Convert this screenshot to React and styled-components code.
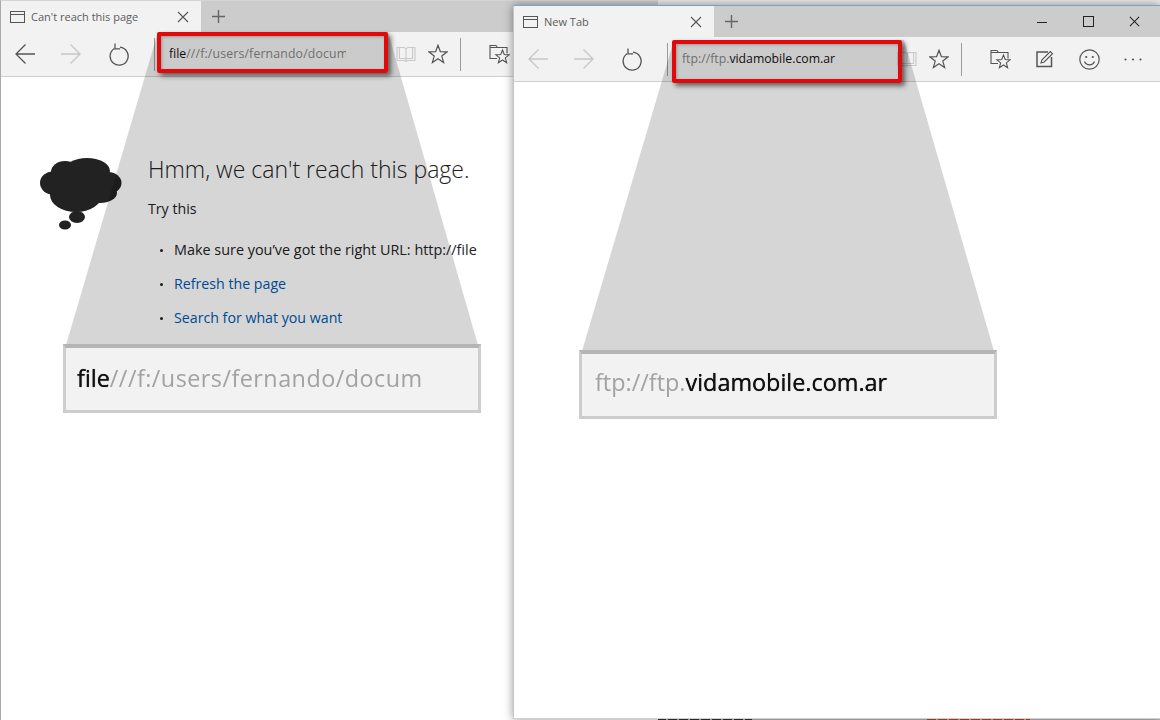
import React from "react";
import styled, { createGlobalStyle } from "styled-components";

const Global = createGlobalStyle`
  html, body { margin: 0; padding: 0; background: #fff; }
  body { font-family: "Open Sans", "Noto Sans", sans-serif; }
`;

const Canvas = styled.div`
  position: relative;
  width: 1160px;
  height: 720px;
  overflow: hidden;
  background: #e9e9e9;
`;

const Window = styled.section`
  position: absolute;
  left: ${(p) => p.$x}px;
  top: ${(p) => p.$y}px;
  width: ${(p) => p.$w}px;
  height: ${(p) => p.$h}px;
  display: flex;
  flex-direction: column;
  box-sizing: border-box;
  background: #fff;
  border-left: 1px solid ${(p) => (p.$front ? "#c4c4c4" : "#a9a9a9")};
  border-top: 1px solid ${(p) => (p.$front ? "#7f9fc6" : "#d4d4d4")};
  border-bottom: ${(p) => (p.$front ? "1px solid #d0d0d0" : "0")};
  box-shadow: ${(p) => (p.$front ? "0 0 9px rgba(0,0,0,.42)" : "none")};
`;

const TabStrip = styled.div`
  display: flex;
  align-items: stretch;
  height: 31px;
  background: #cccccc;
  flex: none;
`;

const Tab = styled.div`
  width: 200px;
  display: flex;
  align-items: center;
  box-sizing: border-box;
  padding-left: 9px;
  background: #f2f2f2;
  color: #5c5c5c;
  font-size: 11px;
`;

const TabTitle = styled.span`
  margin-left: 6px;
  flex: 1;
  white-space: nowrap;
`;

const StripSlot = styled.div`
  width: ${(p) => p.$w || 36}px;
  display: flex;
  align-items: center;
  justify-content: center;
  flex: none;
`;

const Captions = styled.div`
  margin-left: auto;
  margin-right: 3px;
  display: flex;
`;

const Toolbar = styled.div`
  display: flex;
  align-items: center;
  height: 44px;
  flex: none;
  background: #f2f2f2;
  border-bottom: 1px solid #cfcfcf;
  box-sizing: content-box;
`;

const NavSlot = styled.div`
  width: ${(p) => p.$w || 46}px;
  margin-left: ${(p) => p.$ml || 0}px;
  height: 100%;
  display: flex;
  align-items: center;
  justify-content: center;
  flex: none;
`;

const Divider = styled.div`
  width: 1px;
  height: 33px;
  margin-left: ${(p) => p.$ml || 0}px;
  background: #9b9b9b;
  flex: none;
`;

const Address = styled.div`
  width: ${(p) => p.$w}px;
  flex: none;
  box-sizing: border-box;
  padding-left: 14px;
  font-size: 12.25px;
  line-height: 16px;
  color: #858585;
  display: flex;
`;

const UrlClip = styled.div`
  width: 177px;
  overflow: hidden;
  white-space: nowrap;
`;

const Strong = styled.span`
  color: #111;
`;

const TrackedPath = styled.span`
  letter-spacing: ${(p) => p.$track}px;
`;

const Page = styled.main`
  flex: 1;
  min-height: 0;
  display: flex;
  align-items: flex-start;
  gap: 26px;
  padding: 79px 0 0 39px;
  background: #fff;
  color: #222;
`;

const Copy = styled.div`
  display: flex;
  flex-direction: column;
  white-space: nowrap;
`;

const CloudWrap = styled.div`
  margin-top: 2px;
  flex: none;
  display: flex;
`;

const Heading = styled.h1`
  margin: 0;
  font-size: 23px;
  line-height: 26px;
  font-weight: 300;
  color: #222;
`;

const Lead = styled.p`
  margin: 17px 0 0;
  font-size: 14.2px;
  line-height: 20px;
`;

const Hints = styled.ul`
  margin: 21px 0 0;
  padding: 0;
  list-style: none;
  display: flex;
  flex-direction: column;
  gap: 14px;
`;

const Hint = styled.li`
  display: flex;
  align-items: center;
  font-size: ${(p) => (p.$link ? 14.2 : 14.4)}px;
  line-height: 20px;
  color: ${(p) => (p.$link ? "#0058b0" : "#222")};
  padding-left: 12px;
  &::before {
    content: "";
    width: 3px;
    height: 3px;
    border-radius: 50%;
    background: #222;
    margin-right: 11px;
  }
`;

const Beam = styled.div`
  position: absolute;
  left: ${(p) => p.$x}px;
  top: ${(p) => p.$y}px;
  width: 412px;
  height: ${(p) => p.$h}px;
  background: rgba(0, 0, 0, 0.16);
  clip-path: polygon(92px 0, 322px 0, 100% 100%, 0 100%);
  pointer-events: none;
`;

const RedBox = styled.div`
  position: absolute;
  left: ${(p) => p.$x}px;
  top: ${(p) => p.$y}px;
  width: ${(p) => p.$w}px;
  height: ${(p) => p.$h}px;
  box-sizing: border-box;
  border: 4px solid #e10a0a;
  border-radius: 2px;
  box-shadow: 3px 3px 5px rgba(0, 0, 0, 0.55), inset 1px 1px 3px rgba(0, 0, 0, 0.25);
`;

const Magnifier = styled.div`
  position: absolute;
  left: ${(p) => p.$x}px;
  top: ${(p) => p.$y}px;
  width: 418px;
  height: 69px;
  box-sizing: border-box;
  display: flex;
  align-items: center;
  padding: 0 0 ${(p) => p.$lift}px ${(p) => p.$indent}px;
  background: #f2f2f2;
  border: 3px solid #cdcdcd;
  border-top: 4px solid #b5b5b5;
  font-size: 23.4px;
  color: #a2a2a2;
`;

const MagText = styled.div`
  width: 346px;
  overflow: hidden;
  white-space: nowrap;
  filter: blur(0.45px);
`;

const MagStrong = styled.span`
  color: #111;
  text-shadow: 0 0 0.7px #000;
`;

const Peek = styled.div`
  position: absolute;
  left: 514px;
  right: 0;
  top: 718px;
  height: 2px;
  display: flex;
  align-items: flex-end;
  background: #bdbdbd;
`;

const PeekText = styled.span`
  height: 1px;
  width: ${(p) => p.$w}px;
  margin-left: ${(p) => p.$ml}px;
  background: repeating-linear-gradient(90deg, ${(p) => p.$c} 0 9px, transparent 9px 11px);
`;

const Line = ({ d, c = "#555", w = 1.3 }) => (
  <path d={d} fill="none" stroke={c} strokeWidth={w} />
);

const TabIcon = () => (
  <svg width="15" height="12" viewBox="0 0 15 12">
    <rect x="0.5" y="0.5" width="14" height="11" fill="none" stroke="#555" />
    <path d="M1 3.5h13" stroke="#555" />
  </svg>
);

const CloseIcon = ({ s = 12, c = "#555" }) => (
  <svg width={s} height={s} viewBox="0 0 12 12">
    <Line d="M1 1l10 10M11 1L1 11" c={c} w={1.1} />
  </svg>
);

const PlusIcon = () => (
  <svg width="13" height="13" viewBox="0 0 13 13">
    <path d="M6.5 0v13M0 6.5h13" stroke="#666" strokeWidth="1.4" />
  </svg>
);

const Arrow = ({ back, c }) => (
  <svg width="22" height="22" viewBox="0 0 22 22" style={back ? undefined : { transform: "scaleX(-1)" }}>
    <Line d="M21 11H2M11.5 1.5L2 11l9.5 9.5" c={c} w={1.3} />
  </svg>
);

const RefreshIcon = () => (
  <svg width="22" height="23" viewBox="0 0 22 23">
    <Line d="M12 4.2a9 9 0 1 1-5.6 1.3" c="#555" w={1.3} />
    <Line d="M7 0.5v5.4h5.2" c="#555" w={1.3} />
  </svg>
);

const BookIcon = () => (
  <svg width="20" height="18" viewBox="0 0 20 18">
    <Line d="M1 2.5h7l2 1.2 2-1.2h7v13h-7l-2 1-2-1H1zM10 3.7v12.6M3.4 2.5v11h6.6M16.6 2.5v11H10" c="#c9c9c9" w={1.1} />
  </svg>
);

const starPoints = (cx, cy, R, r) =>
  Array.from({ length: 10 }, (_, i) => {
    const a = (-90 + i * 36) * (Math.PI / 180);
    const q = i % 2 ? r : R;
    return `${(cx + q * Math.cos(a)).toFixed(2)},${(cy + q * Math.sin(a)).toFixed(2)}`;
  }).join(" ");

const StarIcon = () => (
  <svg width="20" height="20" viewBox="0 0 20 20">
    <polygon points={starPoints(10, 10.8, 9.6, 4)} fill="none" stroke="#555" strokeWidth="1.2" />
  </svg>
);

const HubIcon = () => (
  <svg width="21" height="21" viewBox="0 0 21 21">
    <Line d="M8 14.5H1V1.5h6l1.5 2H18v6M1 3.5h7.5" c="#555" w={1.1} />
    <polygon points={starPoints(13.5, 13, 7, 3)} fill="#f2f2f2" stroke="#555" strokeWidth="1.1" />
  </svg>
);

const NoteIcon = () => (
  <svg width="18" height="18" viewBox="0 0 18 18">
    <Line d="M12 2H1v14.5h14.5V7" c="#555" w={1.5} />
    <Line d="M5 13l1-3.2L14.3 1.5l2.2 2.2L8.2 12z" c="#555" w={1.1} />
  </svg>
);

const SmileIcon = () => (
  <svg width="21" height="21" viewBox="0 0 21 21">
    <circle cx="10.5" cy="10.5" r="9.7" fill="none" stroke="#555" strokeWidth="1.2" />
    <circle cx="7.2" cy="8" r="1.1" fill="#555" />
    <circle cx="13.8" cy="8" r="1.1" fill="#555" />
    <Line d="M5.5 12.5c1 2.4 3 3.4 5 3.4s4-1 5-3.4" c="#555" w={1.2} />
  </svg>
);

const DotsIcon = () => (
  <svg width="18" height="3" viewBox="0 0 18 3">
    <circle cx="1.5" cy="1.5" r="1.1" fill="#555" />
    <circle cx="9" cy="1.5" r="1.1" fill="#555" />
    <circle cx="16.5" cy="1.5" r="1.1" fill="#555" />
  </svg>
);

const Cloud = () => (
  <svg width="82" height="72" viewBox="40 158 82 72">
    <g fill="#222">
      <ellipse cx="53" cy="183" rx="13" ry="11.5" />
      <ellipse cx="65" cy="172" rx="14" ry="11" />
      <ellipse cx="87" cy="171" rx="23" ry="13" />
      <ellipse cx="108" cy="183" rx="13.5" ry="11" />
      <ellipse cx="100" cy="193" rx="17" ry="10" />
      <ellipse cx="76" cy="195" rx="26" ry="17" />
      <ellipse cx="85" cy="185" rx="25" ry="17" />
      <ellipse cx="77" cy="217" rx="8" ry="6" />
      <ellipse cx="65" cy="225" rx="6" ry="4.5" />
    </g>
  </svg>
);

const Chrome = ({ tab, addressWidth, backColor, children, captions }) => (
  <>
    <TabStrip>
      <Tab>
        <TabIcon />
        <TabTitle>{tab}</TabTitle>
        <StripSlot $w={36}>
          <CloseIcon />
        </StripSlot>
      </Tab>
      <StripSlot $w={35}>
        <PlusIcon />
      </StripSlot>
      {captions}
    </TabStrip>
    <Toolbar>
      <NavSlot $ml={1}><Arrow back c={backColor} /></NavSlot>
      <NavSlot><Arrow c="#c6c6c6" /></NavSlot>
      <NavSlot $ml={2}><RefreshIcon /></NavSlot>
      <Divider $ml={12} />
      <Address $w={addressWidth}>{children}</Address>
      <NavSlot $w={32}><BookIcon /></NavSlot>
      <NavSlot $w={32}><StarIcon /></NavSlot>
      <Divider $ml={6} />
      <NavSlot $w={44} $ml={16}><HubIcon /></NavSlot>
      <NavSlot $w={44} $ml={1}><NoteIcon /></NavSlot>
      <NavSlot $w={44}><SmileIcon /></NavSlot>
      <NavSlot $w={44}><DotsIcon /></NavSlot>
    </Toolbar>
  </>
);

export default function App() {
  return (
    <Canvas>
      <Global />
      <Peek>
        <PeekText $w={95} $ml={143} $c="#333" />
        <PeekText $w={103} $ml={175} $c="#c8401c" />
      </Peek>

      <Window $x={0} $y={0} $w={658} $h={720}>
        <Chrome tab="Can't reach this page" addressWidth={235} backColor="#555">
          <UrlClip>
            <Strong>file</Strong>
            <TrackedPath $track={0.17}>///f:/users/fernando/documents</TrackedPath>
          </UrlClip>
        </Chrome>
        <Page>
          <CloudWrap>
            <Cloud />
          </CloudWrap>
          <Copy>
            <Heading>Hmm, we can't reach this page.</Heading>
            <Lead>Try this</Lead>
            <Hints>
              <Hint>Make sure you’ve got the right URL: http://file</Hint>
              <Hint $link>Refresh the page</Hint>
              <Hint $link>Search for what you want</Hint>
            </Hints>
          </Copy>
        </Page>
      </Window>

      <Beam $x={66} $y={32} $h={313} />
      <RedBox $x={157} $y={32} $w={231} $h={41} />
      <Magnifier $x={63} $y={344} $indent={11} $lift={2}>
        <MagText>
          <MagStrong>file</MagStrong>
          <TrackedPath $track={0.45}>///f:/users/fernando/documents</TrackedPath>
        </MagText>
      </Magnifier>

      <Window $x={513} $y={5} $w={647} $h={714} $front>
        <Chrome
          tab="New Tab"
          addressWidth={223}
          backColor="#c6c6c6"
          captions={
            <Captions>
              <StripSlot $w={46}>
                <svg width="12" height="12" viewBox="0 0 12 12"><path d="M1 6.5h10" stroke="#222" /></svg>
              </StripSlot>
              <StripSlot $w={46}>
                <svg width="11" height="11" viewBox="0 0 11 11"><rect x=".5" y=".5" width="10" height="10" fill="none" stroke="#222" /></svg>
              </StripSlot>
              <StripSlot $w={46}>
                <CloseIcon s={11} c="#222" />
              </StripSlot>
            </Captions>
          }
        >
          <UrlClip>
            ftp://ftp.<Strong>vidamobile.com.ar</Strong>
          </UrlClip>
        </Chrome>
        <Page />
      </Window>

      <Beam $x={582} $y={40} $h={311} />
      <RedBox $x={672} $y={40} $w={230} $h={43} />
      <Magnifier $x={579} $y={350} $indent={13} $lift={7}>
        <MagText>
          ftp://ftp.<MagStrong>vidamobile.com.ar</MagStrong>
        </MagText>
      </Magnifier>
    </Canvas>
  );
}
